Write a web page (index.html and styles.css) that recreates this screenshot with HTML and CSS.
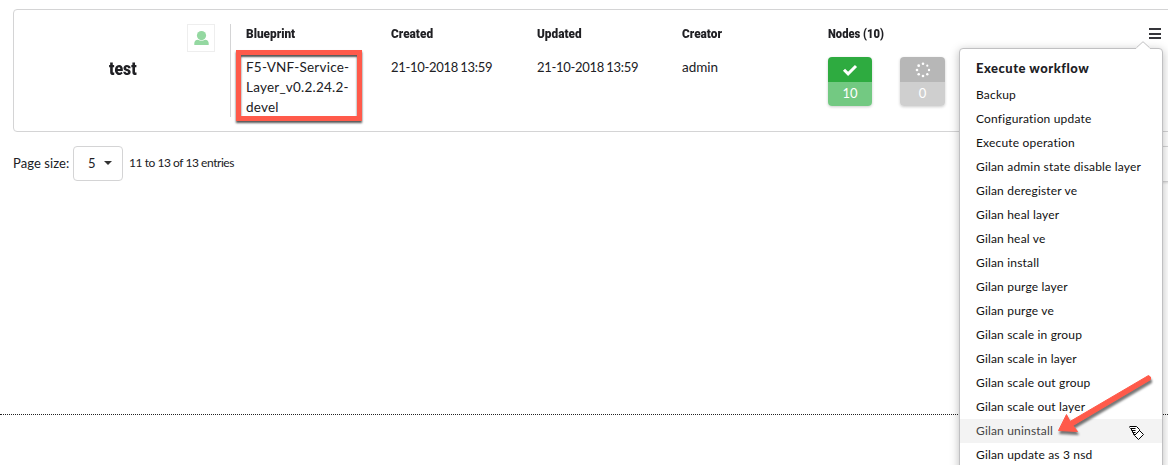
FILE: index.html
```html
<!DOCTYPE html>
<html lang="en">
<head>
<meta charset="utf-8">
<title>Deployments</title>
<link rel="stylesheet" href="styles.css">
</head>
<body>
<main class="page">
  <section class="card">
    <div class="identity">
      <h2 class="name"><span class="narrow">test</span></h2>
      <div class="owner"><svg width="15" height="15" viewBox="0 0 15 15"><circle cx="7.5" cy="4.6" r="4.6"/><path d="M.3 14V12.300Q.3 9 4 8.700Q7.500 10.700 11 8.700Q14.700 9 14.700 12.300V14Z"/></svg></div>
    </div>
    <div class="column"><h3 class="label"><span class="narrow">Blueprint</span></h3><p class="value blueprint">F5-VNF-Service-<br>Layer_v0.2.24.2-<br>devel</p></div>
    <div class="column"><h3 class="label"><span class="narrow">Created</span></h3><p class="value date">21-10-2018 13:59</p></div>
    <div class="column"><h3 class="label"><span class="narrow">Updated</span></h3><p class="value date">21-10-2018 13:59</p></div>
    <div class="column"><h3 class="label"><span class="narrow">Creator</span></h3><p class="value">admin</p></div>
    <div class="column nodes">
      <h3 class="label"><span class="narrow">Nodes (10)</span></h3>
      <div class="badges">
        <div class="badge done"><div class="state"><svg width="16" height="14" viewBox="0 0 16 14"><path d="M2 6.800L6.100 10.800L14 3" fill="none" stroke="#fff" stroke-width="3"/></svg></div><div class="count">10</div></div>
        <div class="badge pending"><div class="state"><svg width="16" height="16" viewBox="0 0 16 16" fill="#fff"><circle cx="8" cy="1.700" r="1.300"/><circle cx="12.300" cy="3.700" r="1.100"/><circle cx="14" cy="8" r="1.200"/><circle cx="12.300" cy="12.300" r="1.200"/><circle cx="8" cy="14" r="1.300"/><circle cx="3.700" cy="12.300" r="1.300"/><circle cx="2" cy="8" r="1.300"/><circle cx="3.700" cy="3.700" r="1.400"/></svg></div><div class="count">0</div></div>
      </div>
    </div>
    <svg class="burger" width="12" height="12" viewBox="0 0 12 12"><path d="M0 1H12M0 6H12M0 10H12" stroke="#35353a" stroke-width="2"/></svg>
  </section>
  <div class="pager">
    <span class="size-label">Page size:</span>
    <div class="select"><span>5</span><i class="caret"></i></div>
    <span class="entries">11 to 13 of 13 entries</span>
    <div class="pages"></div>
  </div>
  <footer class="footer"></footer>
</main>
<nav class="menu">
  <svg class="tip" width="14" height="8" viewBox="0 0 14 8"><path d="M0 7.500L1 6.500L7 .7L13 6.500L14 7.500V8H0Z" fill="#fff"/><path d="M.5 6.700L7 .7L13.500 6.700" fill="none" stroke="#c0c0c2"/></svg>
  <h4 class="menu-title">Execute workflow</h4>
  <a class="item">Backup</a>
  <a class="item">Configuration update</a>
  <a class="item">Execute operation</a>
  <a class="item">Gilan admin state disable layer</a>
  <a class="item">Gilan deregister ve</a>
  <a class="item">Gilan heal layer</a>
  <a class="item">Gilan heal ve</a>
  <a class="item">Gilan install</a>
  <a class="item">Gilan purge layer</a>
  <a class="item">Gilan purge ve</a>
  <a class="item">Gilan scale in group</a>
  <a class="item">Gilan scale in layer</a>
  <a class="item">Gilan scale out group</a>
  <a class="item">Gilan scale out layer</a>
  <a class="item active">Gilan uninstall</a>
  <a class="item">Gilan update as 3 nsd</a>
</nav>
<div class="highlight"></div>
<svg class="arrow" width="110" height="70" viewBox="0 0 110 70"><path d="M97.500 4.500Q100.500 5.500 99.500 8.700L22 54.500L26.500 60.500L7.500 59.500L15.500 43.500L19 50.500Z" fill="#ff5a4a" stroke="#ff5a4a" stroke-linejoin="round"/></svg>
<svg class="pointer" width="17" height="16" viewBox="0 0 17 16"><path d="M1.500 1.500H8.500L12.500 5.500L16 9.500L10.500 15L6.500 11L4.500 8.500L3.500 3.500H1.500Z" fill="#fff"/><path d="M1.500 1.500H8.500L11.500 4.500V6M1.500 2.500L2.500 3.500H7.500M3.500 4V5.500H7.500M4.500 6V7.500H7.500M5.500 8V9.500H7.500M11.500 5.500L15.500 9.500L10.500 14.500L6.500 10.500Z" fill="none" stroke="#000"/></svg>
</body>
</html>
```
FILE: styles.css
```css
* { box-sizing: border-box; }
body { margin: 0; width: 1168px; height: 465px; overflow: hidden; background: #fff; color: #202024; font: 13px/20px Lato, sans-serif; position: relative; }
h2, h3, h4, p { margin: 0; }
.page { display: flex; flex-direction: column; height: 465px; padding-top: 9px; }
.card { display: grid; grid-template-columns: 217px 160px 146px 145px 146px 320px 20px; width: 1175px; height: 123px; margin-left: 13px; padding-top: 14px; border: 1px solid #d4d4d5; border-radius: 4px; }
.identity { display: grid; grid-template-columns: 173px 28px; height: 93px; border-right: 1px solid #d4d4d5; }
.name { padding: 35px 0 0 95px; font: bold 18px/20px Roboto, sans-serif; }
.owner { display: flex; align-items: center; justify-content: center; width: 28px; height: 28px; border: 1px solid #eee; fill: #94d8a1; }
.narrow { display: inline-block; transform-origin: left; transform: scaleX(.91); font-weight: 900; white-space: nowrap; }
.name .narrow { transform: scaleX(.88); }
.nodes .narrow { transform: scaleX(.86); }
.column { padding-left: 15px; }
.column + .column { padding-left: 0; }
.label { height: 33px; font: 900 13px/20px Roboto, sans-serif; }
.value { font-size: 13.5px; line-height: 20px; white-space: nowrap; }
.blueprint { letter-spacing: .22px; }
.date { letter-spacing: -.3px; font-size: 13px; word-spacing: -.7px; }
.badges { display: flex; gap: 28px; }
.badge { width: 44px; height: 49px; border-radius: 4px; overflow: hidden; color: #fff; text-align: center; box-shadow: 0 1px 3px #0003; }
.state { display: flex; align-items: center; justify-content: center; height: 25px; }
.count { height: 24px; line-height: 23px; }
.done .state { background: #2eab40; }
.done .count { background: #73c982; }
.pending { width: 45px; }
.pending .state { background: #b7b7b7; }
.pending .count { background: #cfcfcf; }
.burger { justify-self: start; margin: 4px 0 0 1px; }
.pager { display: flex; align-items: center; margin: 14px 0 0 13px; height: 35px; width: 1175px; }
.size-label { width: 60px; padding-bottom: 1px; letter-spacing: .08px; white-space: nowrap; }
.select { display: flex; align-items: center; width: 50px; height: 35px; padding: 0 0 1px 14px; border: 1px solid #d4d4d5; border-radius: 4px; }
.caret { margin-left: 8px; border: 4px solid transparent; border-top-color: #333; border-bottom: 0; }
.entries { margin-left: 6px; padding-bottom: 1px; font-size: 12px; letter-spacing: -.45px; }
.pages { width: 100px; height: 36px; margin-left: auto; border: 1px solid #d4d4d5; box-shadow: 0 1px 2px #0002; }
.footer { margin-top: 233px; border-top: 1px dotted #222; }
.menu { position: absolute; left: 959px; top: 48px; width: 204px; height: 440px; padding-top: 7px; border: 1px solid #c0c0c2; border-radius: 4px; background: #fff; box-shadow: 0 2px 10px #0004; }
.tip { position: absolute; left: 176px; top: -8px; }
.menu-title { height: 27px; padding-left: 16px; font: 900 13px/25px Lato, sans-serif; letter-spacing: .5px; }
.item { display: block; height: 24px; padding-left: 16px; line-height: 24px; font-size: 12px; letter-spacing: .18px; color: #111; white-space: nowrap; }
.active { background: #f3f3f3; color: #444; }
.highlight { position: absolute; left: 236px; top: 50px; width: 126px; height: 71px; border: 5px solid #ff5a4a; box-shadow: 0 2px 2px #555, inset 0 2px 2px #555; }
.arrow { position: absolute; left: 1051px; top: 371px; filter: drop-shadow(1px 3px 1px #0008); }
.pointer { position: absolute; left: 1128px; top: 425px; }
```
